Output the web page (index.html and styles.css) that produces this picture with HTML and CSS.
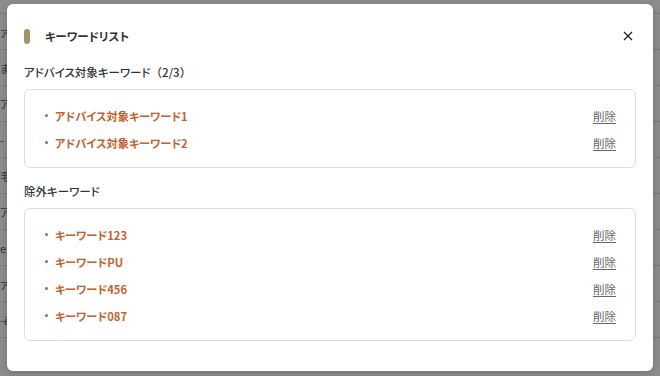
FILE: index.html
```html
<!DOCTYPE html>
<html lang="ja">
<head>
<meta charset="utf-8">
<link rel="stylesheet" href="styles.css">
</head>
<body>
<div class="backdrop">
  <div class="bg-rows">
    <div class="bg-row"><span>ァ</span></div>
    <div class="bg-row"><span>ま</span></div>
    <div class="bg-row"><span>ア</span></div>
    <div class="bg-row"><span>-</span></div>
    <div class="bg-row"><span>毛</span></div>
    <div class="bg-row"><span>ア</span></div>
    <div class="bg-row"><span>e</span></div>
    <div class="bg-row"><span>ァ</span></div>
    <div class="bg-row"><span>-ë</span></div>
    <div class="bg-row"><span></span></div>
  </div>
</div>
<div class="modal">
  <div class="modal-header">
    <span class="pill"></span>
    <span class="modal-title">キーワードリスト</span>
    <button class="close" aria-label="閉じる">
      <svg width="10" height="10" viewBox="0 0 10 10"><path d="M1 1L9 9M9 1L1 9" stroke="#222" stroke-width="1.3" fill="none"/></svg>
    </button>
  </div>
  <h3 class="section-title">アドバイス対象キーワード<span class="count">（2/3）</span></h3>
  <ul class="kw-box">
    <li class="kw-item"><span class="kw">アドバイス対象キーワード1</span><a class="del">削除</a></li>
    <li class="kw-item"><span class="kw">アドバイス対象キーワード2</span><a class="del">削除</a></li>
  </ul>
  <h3 class="section-title">除外キーワード</h3>
  <ul class="kw-box">
    <li class="kw-item"><span class="kw">キーワード123</span><a class="del">削除</a></li>
    <li class="kw-item"><span class="kw">キーワードPU</span><a class="del">削除</a></li>
    <li class="kw-item"><span class="kw">キーワード456</span><a class="del">削除</a></li>
    <li class="kw-item"><span class="kw">キーワード087</span><a class="del">削除</a></li>
  </ul>
</div>
</body>
</html>
```

FILE: styles.css
```css
html, body {
  margin: 0;
  padding: 0;
}
body {
  width: 660px;
  height: 376px;
  overflow: hidden;
  position: relative;
  background: #8d8d8d;
  font-family: "Noto Sans CJK JP", "Noto Sans", sans-serif;
  font-feature-settings: "palt";
}
.backdrop {
  position: absolute;
  inset: 0;
  background: #8d8d8d;
}
.bg-rows {
  padding-top: 13px;
}
.bg-row {
  height: 35px;
  border-top: 1px solid #7c7c7c;
  font-size: 11px;
  color: #333;
  display: flex;
  align-items: center;
}
.modal {
  position: absolute;
  left: 7px;
  top: 4px;
  width: 646px;
  height: 367px;
  box-sizing: border-box;
  background: #fff;
  border-radius: 6px;
  padding: 0 17px;
  box-shadow: 0 2px 8px rgba(0,0,0,0.2);
}
.modal-header {
  display: flex;
  align-items: center;
  height: 60px;
  padding-top: 4px;
  box-sizing: border-box;
}
.pill {
  width: 6px;
  height: 15px;
  border-radius: 3px;
  background: #a8906c;
  margin-right: 15px;
}
.modal-title {
  font-size: 11.5px;
  font-weight: 700;
  color: #333;
  flex: 1;
}
.close {
  border: 0;
  background: none;
  padding: 0;
  width: 10px;
  height: 10px;
  margin-right: 3px;
  display: flex;
  cursor: pointer;
}
.section-title {
  margin: 0;
  font-size: 11.5px;
  font-weight: 500;
  color: #333;
  line-height: 16px;
  height: 16px;
}
.count {
  font-feature-settings: normal;
}
.kw-box {
  list-style: none;
  margin: 9px 0 15px 0;
  padding: 12px 19px 11px 20px;
  border: 1px solid #dedede;
  border-radius: 6px;
  display: flex;
  flex-direction: column;
}
.kw-item {
  display: flex;
  align-items: center;
  justify-content: space-between;
  height: 27px;
}
.kw {
  font-size: 11.2px;
  font-weight: 700;
  color: #c2622f;
  display: flex;
  align-items: center;
}
.kw::before {
  content: "";
  width: 3px;
  height: 3px;
  border-radius: 50%;
  background: #c2622f;
  margin-right: 7px;
}
.del {
  font-size: 11.5px;
  color: #666;
  text-decoration: underline;
  text-underline-offset: 2px;
}
```
